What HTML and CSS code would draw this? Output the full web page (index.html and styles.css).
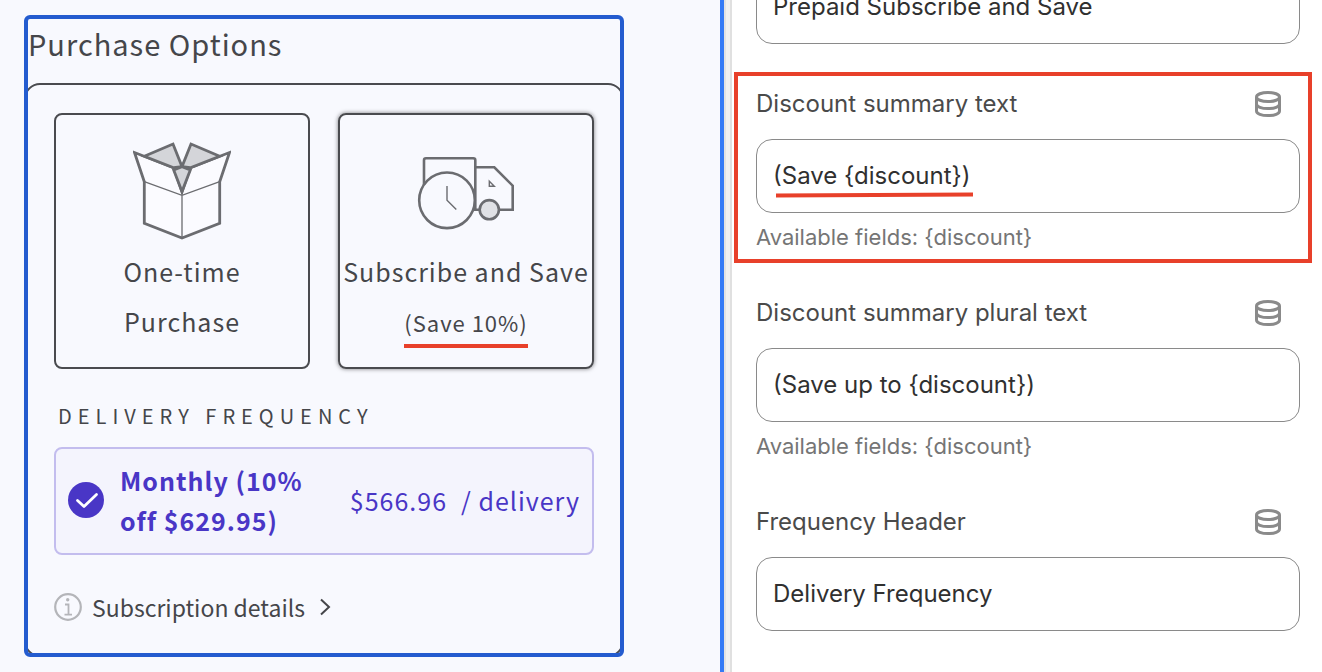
FILE: index.html
```html
<!DOCTYPE html>
<html lang="en">
<head>
<meta charset="utf-8">
<title>Purchase Options</title>
<link rel="stylesheet" href="styles.css">
</head>
<body>
<svg class="sprite" aria-hidden="true">
  <symbol id="database" viewBox="0 0 28 28">
    <g fill="none" stroke="currentColor" stroke-width="3">
      <ellipse cx="14" cy="7" rx="11.5" ry="4.6"/>
      <path d="M2.5 7v14c0 2.600 5 4.600 11.500 4.600s11.500-2 11.500-4.600V7"/>
      <path d="M2.500 14c0 2.600 5 4.600 11.500 4.600s11.500-2 11.500-4.600"/>
    </g>
  </symbol>
</svg>
<div class="editor">
  <main class="preview">
    <section class="widget">
      <h1 class="widget-title">Purchase Options</h1>
      <form class="card">
        <div class="tiles">
          <label class="tile">
            <input class="tile-input" type="radio" name="purchase">
            <svg class="tile-icon" viewBox="0 0 98 98" aria-hidden="true">
              <g stroke="#6b6c70" stroke-width="2.800" fill="none">
                <path fill="#fbfbff" d="M11.300 39.700V81.300L49 96l37.700-14.700V39.700L96.500 10.500 57.300 25.700 49 50 40.700 25.700 1.500 10.500z"/>
                <path fill="#d4d5d9" d="M11.300 14.300L40 2l9 22.700-8.300 1z"/>
                <path fill="#d4d5d9" d="M86.700 14.300L58 2l-9 22.700 8.300 1z"/>
                <path fill="#d4d5d9" d="M40.700 28L49 24.700 57.300 28 49 49.500z"/>
                <path stroke-width="1.300" d="M11.300 39.700L49 53.300l37.700-13.600M49 53.300V96"/>
              </g>
            </svg>
            <span class="tile-name">One-time Purchase</span>
          </label>
          <label class="tile tile-selected">
            <input class="tile-input" type="radio" name="purchase" checked>
            <svg class="tile-icon" viewBox="0 0 98 98" aria-hidden="true">
              <g stroke="#6b6c70" stroke-width="2.600" fill="none">
                <path d="M7 43V18.300q0-2 2-2h47.300q2 0 2 2V67.700M58.300 25.300h19L95.700 43.700v24H82M63 67.700h-6"/>
                <circle cx="30" cy="58.300" r="27.800"/>
                <circle cx="72.300" cy="67.700" r="9.600" fill="#e0e1e5"/>
                <path stroke-width="1.400" d="M30 44v14.300l9.300 9.200M72.300 39.300v5h5z"/>
              </g>
            </svg>
            <span class="tile-name">Subscribe and Save</span>
            <span class="tile-summary">(Save 10%)</span>
          </label>
        </div>
        <h2 class="frequency-title">Delivery Frequency</h2>
        <label class="plan">
          <span class="plan-check">
            <input class="plan-input" type="radio" name="plan" checked>
            <svg class="plan-mark" viewBox="0 0 36 36" aria-hidden="true"><path d="M9.500 18.500l6.500 6L28.500 12.500" fill="none" stroke="#fff" stroke-width="2.800" stroke-linecap="round" stroke-linejoin="round"/></svg>
          </span>
          <span class="plan-name">Monthly (10% off $629.95)</span>
          <span class="plan-price"><span>$566.96</span><span>/ delivery</span></span>
        </label>
        <button class="details" type="button">
          <svg class="details-info" viewBox="0 0 28 28" aria-hidden="true">
            <circle cx="14" cy="14" r="12.800" fill="none" stroke="#b4b5b9" stroke-width="2.200"/>
            <circle cx="13.700" cy="6.800" r="1.700" fill="#b4b5b9"/>
            <path d="M11 11.500h3.500v10M10.500 21.700h7.500" fill="none" stroke="#b4b5b9" stroke-width="1.800"/>
          </svg>
          <span>Subscription details</span>
          <svg class="details-chevron" viewBox="0 0 12 18" aria-hidden="true"><path d="M2 1.500L10 9l-8 7.500" fill="none" stroke="#45464a" stroke-width="2"/></svg>
        </button>
      </form>
    </section>
  </main>
  <aside class="settings">
    <form class="fields">
      <div class="field">
        <input class="field-input" type="text" aria-label="Prepaid label" value="Prepaid Subscribe and Save">
      </div>
      <div class="field field-marked">
        <div class="field-head">
          <label for="summary">Discount summary text</label>
          <button class="source" type="button" aria-label="Connect data source"><svg class="source-icon"><use href="#database"/></svg></button>
        </div>
        <div class="field-box">
          <input class="field-input" id="summary" type="text" value="(Save {discount})">
          <svg class="field-underline" viewBox="0 0 197 6" aria-hidden="true"><path d="M0 3.500L197 2.500" stroke="#e8402a" stroke-width="4"/></svg>
        </div>
        <p class="field-help">Available fields: {discount}</p>
      </div>
      <div class="field">
        <div class="field-head">
          <label for="plural">Discount summary plural text</label>
          <button class="source" type="button" aria-label="Connect data source"><svg class="source-icon"><use href="#database"/></svg></button>
        </div>
        <input class="field-input" id="plural" type="text" value="(Save up to {discount})">
        <p class="field-help">Available fields: {discount}</p>
      </div>
      <div class="field">
        <div class="field-head">
          <label for="header">Frequency Header</label>
          <button class="source" type="button" aria-label="Connect data source"><svg class="source-icon"><use href="#database"/></svg></button>
        </div>
        <input class="field-input" id="header" type="text" value="Delivery Frequency">
      </div>
    </form>
  </aside>
</div>
</body>
</html>
```
FILE: styles.css
```css
* { box-sizing: border-box; }
body { margin: 0; background: #fff; }
h1, h2, p { margin: 0; font-weight: 400; }
svg { display: block; }
.sprite { display: none; }

.editor {
  display: grid;
  grid-template-columns: 720fr 602fr;
  height: 100vh;
  overflow: hidden;
}

/* Store preview */
.preview {
  padding: 15px 96px 0 24px;
  background: #f8f9fe;
  color: #45464a;
  font-family: "Noto Sans CJK SC", "Noto Sans", sans-serif;
}
.widget { position: relative; }
.widget::after {
  content: "";
  position: absolute;
  inset: 0;
  border: 4px solid #245ccf;
  border-radius: 6px;
  pointer-events: none;
}
.widget-title {
  padding: 8px 4px 20px;
  font-size: 29px;
  line-height: 40px;
  letter-spacing: 1px;
}
.card {
  padding: 28px 28px 32px;
  border: 2px solid #4a4b4f;
  border-radius: 16px;
}
.tiles {
  display: grid;
  grid-template-columns: 1fr 1fr;
  gap: 28px;
}
.tile {
  position: relative;
  display: flex;
  flex-direction: column;
  align-items: center;
  min-height: 256px;
  padding-top: 27px;
  border: 2px solid #4a4b4f;
  border-radius: 8px;
  text-align: center;
}
.tile-selected { box-shadow: 0 0 4px rgba(0, 0, 0, 0.5); }
.tile-input {
  position: absolute;
  inset: 0;
  margin: 0;
  opacity: 0;
}
.tile-icon { width: 98px; height: 98px; margin-bottom: 6px; }
.tile-name {
  max-width: 252px;
  font-size: 25px;
  line-height: 50px;
  letter-spacing: 1px;
}
.tile:not(.tile-selected) .tile-name { max-width: 160px; }
.tile-summary {
  position: relative;
  font-size: 22px;
  line-height: 52px;
  letter-spacing: 1px;
}
.tile-summary::after {
  content: "";
  position: absolute;
  inset: auto 0 0;
  height: 4px;
  background: #e8402a;
}
.frequency-title {
  padding: 31px 4px 15px;
  font-size: 20px;
  line-height: 32px;
  letter-spacing: 6px;
  text-transform: uppercase;
}
.plan {
  display: flex;
  align-items: center;
  gap: 16px;
  padding: 11px 12px 13px;
  border: 2px solid #c3bdee;
  border-radius: 8px;
  background: #f4f4fd;
  color: #4936c6;
  font-size: 25px;
  line-height: 40px;
  letter-spacing: 1px;
}
.plan-check { position: relative; flex: none; }
.plan-input {
  display: block;
  appearance: none;
  width: 36px;
  height: 36px;
  margin: 0;
  border-radius: 50%;
  background: #4936c6;
}
.plan-mark { position: absolute; inset: 0; pointer-events: none; }
.plan-name { flex: 1; font-weight: 700; }
.plan-price { display: flex; gap: 14px; white-space: nowrap; }
.details {
  display: flex;
  align-items: center;
  gap: 10px;
  margin-top: 36px;
  padding: 0;
  border: 0;
  background: none;
  color: inherit;
  font: inherit;
  font-size: 23px;
  line-height: 32px;
}
.details-info { width: 28px; height: 28px; }
.details-chevron { width: 12px; height: 18px; margin-left: 4px; }

/* Settings panel */
.settings {
  padding: 0 22px 0 24px;
  border-left: 4px solid #347af6;
  background: linear-gradient(90deg, #e2e2e2 2px, #f0f0f0 2px, #f0f0f0 6px, #e0e0e0 6px, #e0e0e0 8px, #fff 8px);
  color: #4a4a4a;
  font-family: Inter, "Liberation Sans", sans-serif;
  font-size: 24px;
  line-height: 32px;
}
/* The panel is scrolled part-way through its first field. */
.fields {
  display: flex;
  flex-direction: column;
  gap: 44px;
  margin: -30px 0 0 8px;
}
.field { position: relative; }
.field-marked::after {
  content: "";
  position: absolute;
  inset: -16px -12px -10px -22px;
  border: 4px solid #e8402a;
  pointer-events: none;
}
.field-head {
  display: flex;
  align-items: center;
  justify-content: space-between;
  padding-right: 18px;
  margin-bottom: 19px;
}
.source { padding: 0; border: 0; background: none; color: #8a8a8a; }
.source-icon { width: 28px; height: 28px; }
.field-box { position: relative; }
.field-input {
  display: block;
  width: 100%;
  height: 74px;
  padding: 0 16px 2px;
  border: 1px solid #8a8a8a;
  border-radius: 16px;
  background: #fff;
  color: #303030;
  font: inherit;
}
.field-underline {
  position: absolute;
  left: 20px;
  bottom: 15px;
  width: 197px;
  height: 6px;
}
.field-help {
  margin-top: 8px;
  color: #757575;
  font-size: 22px;
}
```
